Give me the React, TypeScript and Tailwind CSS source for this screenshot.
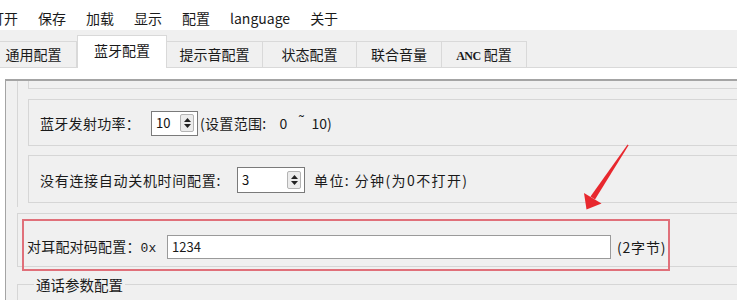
import React from "react";

const menuItems = ["打开", "保存", "加载", "显示", "配置", "language", "关于"];

const tabs = [
  { label: "通用配置", w: "w-[86px] -ml-[9px]" },
  { label: "蓝牙配置", w: "w-[90px]", active: true },
  { label: "提示音配置", w: "w-[96px]" },
  { label: "状态配置", w: "w-[94px]" },
  { label: "联合音量", w: "w-[85px]" },
  { label: "ANC 配置", w: "w-[85px]" },
];

function SpinBox({ value, className }: { value: string; className: string }) {
  return (
    <div className={`flex bg-white border border-[#7a7a7a] ${className}`}>
      <div className="flex-1 flex items-center pl-[4px] text-[13px] text-[#111]">{value}</div>
      <div className="w-[18px] flex items-center justify-center pr-[2px]">
        <div className="w-[14px] h-[18px] flex flex-col items-center justify-center gap-[2px] rounded-[2px] border border-[#b4b4b4] bg-[#ececec]">
          <svg width="7" height="4" viewBox="0 0 7 4">
            <path d="M0 4 L3.5 0 L7 4 Z" fill="#222" />
          </svg>
          <svg width="7" height="4" viewBox="0 0 7 4">
            <path d="M0 0 L7 0 L3.5 4 Z" fill="#222" />
          </svg>
        </div>
      </div>
    </div>
  );
}

export default function App() {
  return (
    <div className="relative w-[737px] h-[300px] overflow-hidden bg-white text-[14px] text-[#1a1a1a] font-['Noto_Sans_CJK_SC','Noto_Sans',sans-serif]">
      {/* menu bar */}
      <div className="h-[30px] flex items-center pt-[6px] gap-[20px] -ml-[10px] whitespace-nowrap">
        {menuItems.map((m) => (
          <span key={m} className="leading-none">
            {m}
          </span>
        ))}
      </div>

      {/* tab strip */}
      <div className="h-[38px] bg-[#f0f0f0] flex items-end border-b border-[#d9d9d9]">
        {tabs.map((t) =>
          t.active ? (
            <div
              key={t.label}
              className={`${t.w} h-[33px] -mb-px bg-white border border-b-0 border-[#d9d9d9] flex items-center justify-center pb-[3px] shrink-0`}
            >
              {t.label}
            </div>
          ) : (
            <div
              key={t.label}
              className={`${t.w} h-[26px] bg-[#f0f0f0] border border-b-0 border-l-0 border-[#d9d9d9] flex items-center justify-center shrink-0 ${
                t.label.startsWith("ANC") ? "border-r" : ""
              }`}
            >
              {t.label.startsWith("ANC") ? (
                <span>
                  <span className="font-['Liberation_Serif',serif] text-[12px] font-bold tracking-[-0.5px]">ANC</span> 配置
                </span>
              ) : (
                t.label
              )}
            </div>
          )
        )}
      </div>

      {/* tab page */}
      <div className="h-[11px]" />
      <div className="ml-[5px] h-[221px] bg-[#f0f0f0] border-l border-t-2 border-[#a4a4a4] pl-[11px]">
        {/* outer group */}
        <div className="border-l border-[#d6d6d6] pl-[10px] pb-[4px]">
          <div className="h-[8px] border-l border-b border-[#d6d6d6]" />
          <div className="mt-[10px] h-[47px] border border-r-0 border-[#d6d6d6] flex items-center pl-[11px] pt-[1px]">
            <span className="w-[111px] shrink-0 tracking-[0.3px]">蓝牙发射功率：</span>
            <SpinBox value="10" className="w-[47px] h-[25px]" />
            <span className="ml-[2px] whitespace-nowrap flex items-center">
              <span className="tracking-[0.3px]">(设置范围:</span>
              <span className="ml-[13px]">0</span>
              <span className="ml-[11px] -translate-y-[3px]">˜</span>
              <span className="ml-[7px]">10)</span>
            </span>
          </div>
          <div className="mt-[9px] h-[48px] border border-r-0 border-[#d6d6d6] flex items-center pl-[11px] pt-[2px]">
            <span className="w-[197px] shrink-0 whitespace-nowrap tracking-[0.7px]">没有连接自动关机时间配置:</span>
            <SpinBox value="3" className="w-[68px] h-[26px]" />
            <span className="ml-[9px] whitespace-nowrap tracking-[1.4px]">单位: 分钟(为0不打开)</span>
          </div>
        </div>

        {/* pairing code */}
        <div className="mt-[6px] h-[54px] border border-r-0 border-[#d6d6d6] pl-[9px] pt-[21px]">
          <div className="flex items-center h-[24px]">
            <span className="w-[140px] shrink-0 whitespace-nowrap tracking-[0.2px]">
              对耳配对码配置：<span className="font-['Liberation_Mono',monospace] text-[13px] tracking-normal">0x</span>
            </span>
            <div className="w-[444px] h-[24px] bg-white border border-[#9a9a9a] flex items-center pl-[4px] text-[13px]">
              1234
            </div>
            <span className="ml-[6px] whitespace-nowrap tracking-[0.8px]">(2字节)</span>
          </div>
        </div>

        <fieldset className="mt-[7px] border-t border-l border-[#d6d6d6] pl-[16px] h-[40px]">
          <legend className="px-[2px] text-[14.5px]">通话参数配置</legend>
        </fieldset>
      </div>

      {/* annotation */}
      <div className="absolute left-[22px] top-[219px] w-[648px] h-[52px] border-2 border-[#e0707a] pointer-events-none" />
      <svg className="absolute left-0 top-0 pointer-events-none" width="737" height="300" viewBox="0 0 737 300">
        <path d="M627.6 144.5 L628.6 145.3 L595 199.5 L590.5 196.5 Z" fill="#e8282e" />
        <path d="M586.5 209.5 L584 193 L601.5 203.5 Z" fill="#e8282e" />
      </svg>
    </div>
  );
}
